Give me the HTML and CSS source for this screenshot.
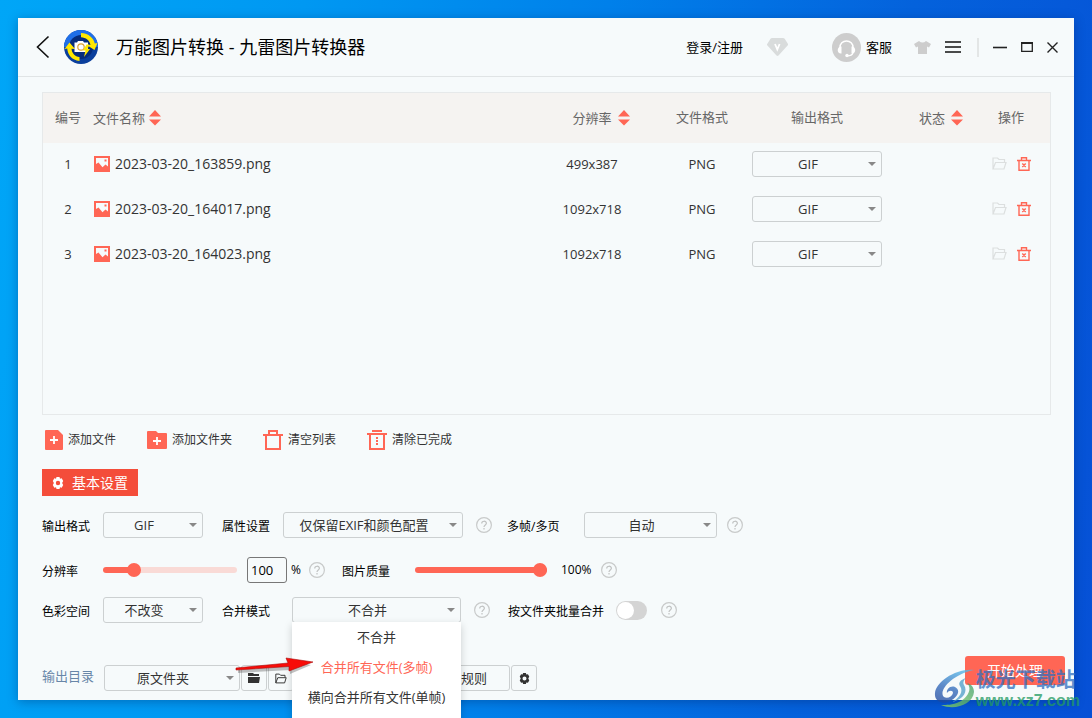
FILE: index.html
```html
<!DOCTYPE html>
<html lang="zh-CN">
<head>
<meta charset="utf-8">
<title>万能图片转换 - 九雷图片转换器</title>
<link rel="stylesheet" href="styles.css">
</head>
<body>
<svg class="defs" aria-hidden="true">
  <symbol id="sort" viewBox="0 0 12 16"><path d="M6 0l6 6.500H0zM6 15.500l6-6H0z" fill="#ff6655"/></symbol>
  <symbol id="picture" viewBox="0 0 16 16"><path d="M0 0h16v16H0z" fill="#ff6655"/><path d="M2 2h12v8.500l-2.500-2-3 2.800L4.500 6.500 2 8z" fill="#f6fafb"/><path d="M10.500 3.500h2v2h-2z" fill="#ff6655"/></symbol>
  <symbol id="folder-open" viewBox="0 0 15 13"><path d="M1 12V1h4.500l1.500 1.500h5.500V5M1 12l2.500-6.500h10.500L12 12z" fill="none" stroke="currentColor" stroke-width="1.200"/></symbol>
  <symbol id="delete" viewBox="0 0 14 14"><path d="M0 3.500h14M2 3.500v9.800h10V3.500M4.500 3V.8h5V3M5.300 6.500l3.400 3.600M8.700 6.500l-3.400 3.600" fill="none" stroke="#ff6655" stroke-width="1.400"/></symbol>
  <symbol id="help" viewBox="0 0 16 16"><circle cx="8" cy="8" r="7.400" fill="none" stroke="#c8caca" stroke-width="1.200"/><path d="M5.700 6.500c0-3 4.700-3 4.700-.2C10.400 8 8 7.900 8 9.900M8 11v1.500" fill="none" stroke="#c0c2c2" stroke-width="1.200"/></symbol>
  <symbol id="gear" viewBox="0 0 12 12"><path fill="currentColor" fill-rule="evenodd" d="M4.500 0h3l.5 1.700 1.700-.4 1.500 2.600L10.100 6l1.100 2.100-1.500 2.600-1.700-.4-.5 1.700h-3L4 10.300l-1.700.4L.8 8.100 1.900 6 .8 3.900l1.500-2.600 1.700.4zM6 3.800a2.200 2.200 0 1 0 0 4.400 2.200 2.200 0 0 0 0-4.400z"/></symbol>
</svg>

<main class="window">
  <header class="titlebar">
    <button class="bare" aria-label="返回"><svg width="14" height="24" viewBox="0 0 14 24"><path d="M12.500 1.500L1.500 12l11 10.500" fill="none" stroke="#111" stroke-width="1.600"/></svg></button>
    <svg class="logo" width="34" height="34" viewBox="0 0 34 34">
      <circle cx="17" cy="17" r="17" fill="#0b3f9c"/><path d="M0 17A17 17 0 0 1 34 17L17 17z" fill="#1f6fe8"/><circle cx="17" cy="17" r="12" fill="#062c7c"/>
      <path d="M17 3c8 .5 12.500 5 13.800 10.500L33.500 13l-3 7-7-4.500 3-.8C25.500 10.500 22 7.500 17 7.300zM15.500 31C8 30 4 25.500 3.200 18.500L.5 19l5-6.500 5.500 6.500-3.500-.3c.5 4.500 3.500 8 8 8.300z" fill="#ffe800"/>
      <path d="M10.500 12.500h2.500l1-1.500h5l1 1.500h4v9.500H10.500z" fill="#fff"/><circle cx="17" cy="17" r="3.200" fill="#fff" stroke="#d9a23a" stroke-width="1.200"/><path d="M22.500 14.500l-3.500 6h2.500L20 27l6-8h-2.500l2-4.500z" fill="#ffe800"/>
    </svg>
    <h1 class="title">万能图片转换 - 九雷图片转换器</h1>
    <button class="bare login">登录/注册</button>
    <button class="bare vip" aria-label="会员"><svg width="21" height="18" viewBox="0 0 21 18"><path d="M5 0h11q1 0 1.700.8L21 6q.3.700-.2 1.300L11.500 17.500q-1 .8-2 0L.2 7.300Q-.2 6.700.2 6L3.500.8Q4 0 5 0z" fill="#d9dcdc"/><path d="M8 6l2.300 5.500L12.600 6" fill="none" stroke="#fff" stroke-width="1.800"/></svg></button>
    <button class="bare service"><svg width="29" height="29" viewBox="0 0 29 29"><circle cx="14.500" cy="14.500" r="14.500" fill="#cdcdcd"/><path d="M8 15c-.8-9.300 13.800-9.300 13 0" fill="none" stroke="#fff" stroke-width="1.600"/><path d="M9.500 13.500v7C4.500 21 4.500 13.500 9.500 13.500zM19.500 13.500v7c5 .5 5-7 0-7z" fill="#fff"/><path d="M21 20c-.8 2-2.500 2.800-5.500 2.800" fill="none" stroke="#fff" stroke-width="1.300"/><circle cx="15" cy="22.500" r="1.700" fill="#fff"/></svg>客服</button>
    <button class="bare skin" aria-label="皮肤"><svg width="17" height="13" viewBox="0 0 17 13"><path d="M5 0q3.500 3 7 0l5 3-2 3.500-2-1V13H4V5.500l-2 1L0 3z" fill="#cdcdcd"/></svg></button>
    <button class="bare" aria-label="菜单"><svg width="16" height="12" viewBox="0 0 16 12"><path d="M0 1h16M0 6h16M0 11h16" stroke="#111" stroke-width="1.600"/></svg></button>
    <span class="divider"></span>
    <button class="bare" aria-label="最小化"><svg width="14" height="12" viewBox="0 0 14 12"><path d="M0 6.500h14" stroke="#222" stroke-width="1.600"/></svg></button>
    <button class="bare" aria-label="最大化"><svg width="12" height="10" viewBox="0 0 12 10"><path d="M.7 1v8.300h10.600V1" fill="none" stroke="#222" stroke-width="1.300"/><path d="M0 1h12" stroke="#222" stroke-width="2"/></svg></button>
    <button class="bare" aria-label="关闭"><svg width="11" height="11" viewBox="0 0 11 11"><path d="M.5.5l10 10M10.500.5l-10 10" stroke="#222" stroke-width="1.400"/></svg></button>
  </header>

  <section class="file-list">
    <table class="files">
      <colgroup><col class="col-index"><col><col class="col-size"><col class="col-type"><col class="col-output"><col class="col-status"><col class="col-actions"></colgroup>
      <thead><tr>
        <th>编号</th>
        <th class="name"><button class="bare sort-name">文件名称<svg width="12" height="16"><use href="#sort"/></svg></button></th>
        <th><button class="bare sort-center">分辨率<svg width="12" height="16"><use href="#sort"/></svg></button></th>
        <th>文件格式</th><th>输出格式</th>
        <th><button class="bare sort-center">状态<svg width="12" height="16"><use href="#sort"/></svg></button></th>
        <th class="actions">操作</th>
      </tr></thead>
      <tbody>
        <tr><td>1</td><td class="name"><span class="file"><svg width="16" height="16"><use href="#picture"/></svg>2023-03-20_163859.png</span></td><td>499x387</td><td>PNG</td><td><span class="select"><select aria-label="输出格式"><option>GIF</option></select></span></td><td></td><td class="actions"><span class="row-actions"><button class="bare muted" aria-label="打开"><svg width="15" height="13"><use href="#folder-open"/></svg></button><button class="bare" aria-label="删除"><svg width="14" height="14"><use href="#delete"/></svg></button></span></td></tr>
        <tr><td>2</td><td class="name"><span class="file"><svg width="16" height="16"><use href="#picture"/></svg>2023-03-20_164017.png</span></td><td>1092x718</td><td>PNG</td><td><span class="select"><select aria-label="输出格式"><option>GIF</option></select></span></td><td></td><td class="actions"><span class="row-actions"><button class="bare muted" aria-label="打开"><svg width="15" height="13"><use href="#folder-open"/></svg></button><button class="bare" aria-label="删除"><svg width="14" height="14"><use href="#delete"/></svg></button></span></td></tr>
        <tr><td>3</td><td class="name"><span class="file"><svg width="16" height="16"><use href="#picture"/></svg>2023-03-20_164023.png</span></td><td>1092x718</td><td>PNG</td><td><span class="select"><select aria-label="输出格式"><option>GIF</option></select></span></td><td></td><td class="actions"><span class="row-actions"><button class="bare muted" aria-label="打开"><svg width="15" height="13"><use href="#folder-open"/></svg></button><button class="bare" aria-label="删除"><svg width="14" height="14"><use href="#delete"/></svg></button></span></td></tr>
      </tbody>
    </table>
  </section>

  <nav class="toolbar">
    <button class="bare"><svg width="18" height="20" viewBox="0 0 18 20"><path d="M1 0h12l5 5v14q0 1-1 1H1q-1 0-1-1V1q0-1 1-1z" fill="#ff6655"/><path d="M9 6v8M5 10h8" stroke="#fff" stroke-width="1.800"/></svg>添加文件</button>
    <button class="bare"><svg width="20" height="18" viewBox="0 0 20 18"><path d="M1 0h8l2 2h8q1 0 1 1v14q0 1-1 1H1q-1 0-1-1V1q0-1 1-1z" fill="#ff6655"/><path d="M10 6v8M6 10h8" stroke="#fff" stroke-width="1.800"/></svg>添加文件夹</button>
    <button class="bare"><svg width="20" height="20" viewBox="0 0 20 20"><path d="M0 5h20M3 5v14h14V5M6 5V1h8v4" fill="none" stroke="#ff6655" stroke-width="2"/></svg>清空列表</button>
    <button class="bare"><svg width="20" height="20" viewBox="0 0 20 20"><path d="M0 4h20M3 4v15h14V4M5 1h10" fill="none" stroke="#ff6655" stroke-width="2"/><path d="M10 7v8" stroke="#ff6655" stroke-width="2" stroke-dasharray="2 1"/></svg>清除已完成</button>
  </nav>

  <button class="tab"><svg width="12" height="12"><use href="#gear"/></svg>基本设置</button>

  <section class="settings">
    <div class="setting-row">
      <label class="label" for="format">输出格式</label>
      <span class="select w100"><select id="format"><option>GIF</option></select></span>
      <label class="label second" for="props">属性设置</label>
      <span class="select w180"><select id="props"><option>仅保留EXIF和颜色配置</option></select></span>
      <svg class="help" width="16" height="16"><use href="#help"/></svg>
      <label class="label frames" for="frames">多帧/多页</label>
      <span class="select w133"><select id="frames"><option>自动</option></select></span>
      <svg class="help near" width="16" height="16"><use href="#help"/></svg>
    </div>
    <div class="setting-row sliders">
      <label class="label" for="scale">分辨率</label>
      <input class="slider partial" id="scale" type="range" min="0" max="100" value="20">
      <input class="number" type="text" value="100" aria-label="分辨率百分比">
      <span class="percent">%</span>
      <svg class="help tight" width="16" height="16"><use href="#help"/></svg>
      <label class="label quality" for="quality">图片质量</label>
      <input class="slider full" id="quality" type="range" min="0" max="100" value="100">
      <output class="quality-value" for="quality">100%</output>
      <svg class="help tight" width="16" height="16"><use href="#help"/></svg>
    </div>
    <div class="setting-row">
      <label class="label" for="color">色彩空间</label>
      <span class="select w100"><select id="color"><option>不改变</option></select></span>
      <label class="label second merge" for="merge">合并模式</label>
      <div class="select w169">
        <select id="merge"><option>不合并</option></select>
        <ul class="menu">
          <li>不合并</li>
          <li class="active">合并所有文件(多帧)</li>
          <li>横向合并所有文件(单帧)</li>
        </ul>
        <svg class="pointer" width="84" height="24" viewBox="0 0 84 24"><path d="M3 13l50-5v-4l23 4-21 9v-4L3 16z" fill="#333" opacity=".3"/><path d="M1 11l52-5-2-5 27 4-24 9V9.500L1 13z" fill="#f80c08" stroke="#a80d0d" stroke-width=".6"/></svg>
      </div>
      <svg class="help" width="16" height="16"><use href="#help"/></svg>
      <label class="label batch" for="batch">按文件夹批量合并</label>
      <input class="switch" id="batch" type="checkbox" role="switch">
      <svg class="help after-switch" width="16" height="16"><use href="#help"/></svg>
    </div>
  </section>

  <footer class="footer">
    <label class="output-label" for="output">输出目录</label>
    <span class="select w136"><select id="output"><option>原文件夹</option></select></span>
    <button class="box" aria-label="选择文件夹"><svg width="12" height="10" viewBox="0 0 12 10"><path d="M0 0h5l1 1h5v2H0zM0 4h12l-1 6H0z" fill="#333"/></svg></button>
    <button class="box" aria-label="打开文件夹"><svg width="12" height="11"><use href="#folder-open"/></svg></button>
    <button class="box rules">规则</button>
    <button class="box" aria-label="设置"><svg width="11" height="11"><use href="#gear"/></svg></button>
    <button class="start">开始处理</button>
  </footer>

  <div class="watermark">
    <svg width="42" height="40" viewBox="0 0 42 40"><defs><linearGradient id="swirl" x1="0.700" y1="0" x2="0.300" y2="1"><stop offset="0" stop-color="#4fb6e8"/><stop offset=".6" stop-color="#2b64b8"/><stop offset="1" stop-color="#1c48a0"/></linearGradient><linearGradient id="leaf" x1="1" y1="0" x2="0" y2="1"><stop offset="0" stop-color="#3a9a6a"/><stop offset="1" stop-color="#8fd85a"/></linearGradient></defs>
      <path d="M40 1C22-1 2 13 1 24c-1 9 8 12 15 8 8-4 11-11 5-14-5-2-9 3-8 6 2-3 6-3 6 0-1 4-6 6-9 4C4 23 16 6 40 1z" fill="url(#swirl)"/><path d="M33 14c6 6 0 15-8 19-6 3-13 3-18 3 14 6 32-1 33-13 0-5-3-8-7-9z" fill="url(#leaf)"/><path d="M32 9c-6 2-8 5-6 8 4 6-1 12-8 16 12-3 16-11 12-17-1-2-1-4 2-7z" fill="#4c9cc8"/></svg>
    <div><div class="mark-name">极光下载站</div><div class="mark-url">www.xz7.com</div></div>
  </div>
</main>
</body>
</html>
```
FILE: styles.css
```css
* { box-sizing: border-box; }

body {
  margin: 0;
  padding: 18px;
  min-height: 100vh;
  display: flex;
  overflow: hidden;
  background: linear-gradient(100deg, #00a6f7 0%, #0098f2 25%, #0080ea 50%, #0462dc 75%, #0650d6 100%);
  font: 13px/18px "Open Sans", "Noto Sans CJK SC", sans-serif;
  color: #333;
}

button, input, select { font: inherit; color: inherit; margin: 0; }
svg { flex: none; display: block; }
.defs { position: absolute; width: 0; height: 0; }

.bare {
  border: 0;
  padding: 0;
  background: none;
  display: inline-flex;
  align-items: center;
  white-space: nowrap;
}

.window {
  position: relative;
  flex: 1;
  min-width: 0;
  display: flex;
  flex-direction: column;
  background: #f6fafb;
  box-shadow: 0 2px 10px rgba(0, 30, 90, .35);
}

.titlebar {
  display: flex;
  align-items: center;
  height: 59px;
  flex: none;
  padding: 0 16px 0 18px;
  gap: 14px;
  border-bottom: 1px solid #e0e4e5;
  color: #000;
}
.title { margin: 0 auto 0 4px; font-size: 18px; font-weight: 400; line-height: 26px; white-space: nowrap; }
.vip { margin: 0 30px 0 10px; }
.service { gap: 5px; }
.skin { margin-left: 8px; }
.divider { width: 2px; height: 19px; margin: 0 0 0 2px; background: #e3e6e6; }

.file-list {
  flex: 1;
  margin: 15px 23px 0 24px;
  border: 1px solid #e6e9ea;
}
.files { width: 100%; border-collapse: collapse; table-layout: fixed; }
.files th { height: 50px; padding: 0 0 2px; background: #f5f3f1; color: #666; font-weight: 400; text-align: center; }
.files td { height: 45px; padding: 0 0 4px; text-align: center; }
.files .name { text-align: left; }
.files .actions { padding-right: 10px; }
.col-index { width: 50px; }
.col-size { width: 120px; }
.col-type { width: 100px; }
.col-output { width: 130px; }
.col-status { width: 100px; }
.col-actions { width: 68px; }
.sort-name { gap: 4px; vertical-align: middle; }
.sort-center { gap: 6px; padding-left: 18px; vertical-align: middle; }
.file { display: flex; align-items: center; gap: 5px; padding-left: 1px; font-size: 14px; }
.row-actions { display: flex; align-items: center; justify-content: center; gap: 10px; }
.muted { color: #dcdfdf; }

.select { position: relative; display: block; flex: none; }
.select > select {
  display: block;
  width: 100%;
  height: 26px;
  padding: 0 18px 0 0;
  border: 1px solid #ccd0d1;
  border-radius: 3px;
  background: transparent;
  appearance: none;
  text-align: center;
  text-align-last: center;
}
.select::after {
  content: "";
  position: absolute;
  right: 6px;
  top: 11px;
  border: 4px solid transparent;
  border-top-color: #888;
  border-bottom: 0;
  pointer-events: none;
}
.w100 { width: 100px; }
.w133 { width: 133px; }
.w136 { width: 136px; }
.w169 { width: 169px; }
.w180 { width: 180px; }

.toolbar { display: flex; align-items: center; gap: 31px; height: 50px; padding-left: 27px; flex: none; font-size: 12px; line-height: 20px; }
.toolbar .bare { gap: 5px; }

.tab {
  align-self: flex-start;
  display: flex;
  align-items: center;
  gap: 8px;
  height: 27px;
  margin: 4px 0 0 24px;
  padding: 0 10px;
  border: 0;
  background: #f44d3a;
  color: #fff;
  font-size: 14px;
}

.settings { padding: 16px 24px 0; }
.setting-row { display: flex; align-items: center; height: 26px; }
.setting-row.sliders { margin: 19px 0 14px; }
.label { width: 61px; flex: none; padding-top: 3px; font-size: 12px; color: #000; white-space: nowrap; }
.second { margin-left: 19px; }
.merge { width: 70px; }
.help { margin-left: 13px; }
.help.near { margin-left: 10px; }
.help.tight { margin-left: 8px; }
.help.after-switch { margin-left: 14px; }
.frames { width: 77px; margin-left: 15px; }
.quality { width: 73px; margin-left: 17px; }
.batch { width: 108px; margin-left: 18px; }

.slider { appearance: none; width: 134px; height: 14px; background: none; }
.slider.full { width: 132px; margin-right: 2px; }
.slider::-webkit-slider-runnable-track { height: 6px; border-radius: 3px; background: #ff6655; }
.slider.partial::-webkit-slider-runnable-track { background: linear-gradient(90deg, #ff6655 24%, #f9dad6 24%); }
.slider::-webkit-slider-thumb { appearance: none; width: 14px; height: 14px; margin-top: -4px; border-radius: 50%; background: #ff6655; }
.number { width: 40px; height: 26px; margin-left: 10px; padding: 0 3px; border: 1px solid #777; border-radius: 3px; background: transparent; color: #000; }
.percent { width: 14px; padding-left: 4px; font-size: 12px; color: #000; }
.quality-value { width: 40px; margin-left: 12px; font-size: 12px; color: #000; }
.quality-value + .help { margin-left: 0; }

.switch { appearance: none; width: 31px; height: 19px; border-radius: 10px; background: #d4d4d4; display: flex; padding: 1px; }
.switch::before { content: ""; width: 17px; height: 17px; border-radius: 50%; background: #fff; }

.menu {
  position: absolute;
  z-index: 2;
  top: 25px;
  left: 0;
  width: 100%;
  margin: 0;
  padding: 0 0 12px;
  list-style: none;
  background: #fff;
  text-align: center;
  line-height: 30px;
  white-space: nowrap;
  box-shadow: 0 3px 8px rgba(0, 0, 0, .18);
}
.menu .active { color: #ff6655; }
.pointer { position: absolute; z-index: 3; left: -57px; top: 60px; }

.footer { display: flex; align-items: flex-end; gap: 1px; padding: 33px 9px 9px 24px; }
.output-label { width: 61px; padding-bottom: 6px; color: #6886a8; white-space: nowrap; }
.box {
  display: flex;
  align-items: center;
  justify-content: center;
  width: 26px;
  height: 26px;
  padding: 0;
  border: 1px solid #ccd0d1;
  border-radius: 3px;
  background: transparent;
}
.rules { width: 72px; margin-left: 143px; }
.start {
  align-self: flex-start;
  height: 29px;
  margin: 0 0 6px auto;
  padding: 0 22px;
  border: 0;
  border-radius: 3px;
  background: #ff6655;
  color: #fff;
  font-size: 14px;
}

.watermark {
  position: absolute;
  z-index: 4;
  right: -6px;
  bottom: -10px;
  display: flex;
  align-items: center;
  opacity: .75;
  font-weight: 700;
  white-space: nowrap;
  pointer-events: none;
}
.mark-name { font-size: 20px; line-height: 24px; color: #2f6fc0; }
.mark-url { font: 700 16px/18px "Liberation Sans", sans-serif; color: #229a62; }
```
